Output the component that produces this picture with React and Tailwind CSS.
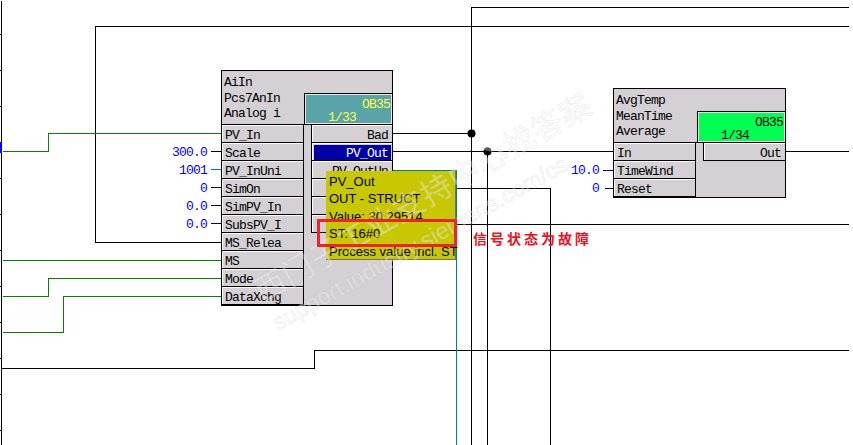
import React from 'react';

const BLACK = '#000000';
const GREEN = '#0a7d0a';
const TEAL = '#008080';
const NAVY = '#000080';

// Wires of the chart, as [colour, x1,y1, x2,y2, ...]
const wires = [
  [BLACK, 1, 0, 1, 445],
  [BLACK, 471, 445, 471, 7, 848, 7],
  [BLACK, 222, 242, 95, 242, 95, 26, 848, 26],
  [BLACK, 392, 133, 471, 133],
  [BLACK, 392, 151, 613, 151],
  [BLACK, 487, 151, 487, 445],
  [BLACK, 785, 151, 848, 151],
  [BLACK, 392, 188, 550, 188, 550, 445],
  [BLACK, 392, 224, 848, 224],
  [BLACK, 1, 368, 314, 368, 314, 350, 848, 350],
  [TEAL, 392, 170, 456, 170, 456, 445],
  [GREEN, 2, 151, 48, 151, 48, 133, 222, 133],
  [GREEN, 2, 260, 222, 260],
  [GREEN, 2, 296, 48, 296, 48, 278, 222, 278],
  [GREEN, 2, 332, 63, 332, 63, 296, 222, 296],
  [BLACK, 210, 151, 222, 151],
  [TEAL, 210, 169, 222, 169],
  [BLACK, 210, 187, 222, 187],
  [BLACK, 210, 205, 222, 205],
  [NAVY, 210, 223, 222, 223],
  [BLACK, 604, 188, 613, 188],
  [NAVY, 602, 170, 613, 170],
];

const ticks = [34, 70, 106, 178, 214, 250, 286, 322, 358, 394, 430];

function Wires() {
  return (
    <svg className="absolute inset-0" width="853" height="445" shapeRendering="crispEdges">
      {ticks.map((y) => (
        <line key={y} x1="0" x2="2" y1={y + 0.5} y2={y + 0.5} stroke="#000" />
      ))}
      {wires.map(([color, ...pts], i) => {
        const points = [];
        for (let n = 0; n < pts.length; n += 2) {
          points.push(`${pts[n] + 0.5},${pts[n + 1] + 0.5}`);
        }
        return <polyline key={i} points={points.join(' ')} fill="none" stroke={color} strokeWidth="1" />;
      })}
      <rect x="0" y="142" width="2" height="11" fill="#0000ff" />
      <g shapeRendering="auto">
        <circle cx="471.5" cy="133.5" r="4" fill="#000" />
        <circle cx="487.5" cy="151.5" r="4" fill="#000" />
      </g>
    </svg>
  );
}

function InputPin({ label, value }) {
  return (
    <div className="relative h-[18px] border-b border-black flex">
      {value && (
        <span className="absolute right-full mr-[15px] h-full flex items-center pt-[1px] leading-none text-[#0000ff]">
          {value}
        </span>
      )}
      <div className="flex-1 border-t border-l border-white flex items-center pl-[2px] pt-[2px] leading-none">
        {label}
      </div>
    </div>
  );
}

function OutputPin({ label, selected }) {
  return (
    <div className="h-[18px] border-b border-black flex">
      <div className="flex-1 border-t border-l border-white flex items-center justify-end leading-none">
        {selected ? (
          <span className="w-full h-[15px] mx-[1px] bg-[#0000a8] text-white flex items-center justify-end pt-[2px] pr-[3px]">
            {label}
          </span>
        ) : (
          <span className="pt-[2px] pr-[4px]">{label}</span>
        )}
      </div>
    </div>
  );
}

function Block({ left, top, width, height, lines, badge, inputs, outputs }) {
  return (
    <div
      className="absolute bg-[#d4d0d4] border border-black flex flex-col font-['Liberation_Mono',monospace] text-[13px] tracking-[-0.8px] text-black"
      style={{ left, top, width, height }}
    >
      <div className="relative h-[54px] border-b border-black shrink-0 pl-[2px] pt-[4px] leading-[15.7px]">
        {lines.map((line) => (
          <div key={line}>{line}</div>
        ))}
        <div
          className={`absolute right-0 bottom-0 w-[88px] h-[31px] border-t border-l border-black ${badge.bg} ${badge.color}`}
        >
          <div className="h-full border border-[#e8e8e8] relative leading-none">
            <span className="absolute right-[1px] top-[3px]">OB35</span>
            <span className="absolute left-[22px] -bottom-[1px]">{badge.id}</span>
          </div>
        </div>
      </div>
      <div className="flex flex-1">
        <div className="w-[82px] border-r border-black">
          {inputs.map((pin) => (
            <InputPin key={pin.label} label={pin.label} value={pin.value} />
          ))}
        </div>
        <div className="flex-1 pl-[7px]">
          <div className="border-l border-black">
            {outputs.map((pin, i) => (
              <OutputPin key={i} label={pin} selected={pin === 'PV_Out'} />
            ))}
          </div>
        </div>
      </div>
    </div>
  );
}

function Tooltip() {
  return (
    <div className="absolute left-[326px] top-[171px] w-[130px] h-[89px] bg-[#c8c800] border-r border-b border-[#707070] pl-[3px] pt-[2px] font-['Liberation_Sans',sans-serif] text-[13px] leading-[17.4px] text-black whitespace-nowrap">
      <div>PV_Out</div>
      <div>OUT - STRUCT</div>
      <div>Value: 30.29514</div>
      <div>ST: 16#0</div>
      <div>Process value incl. ST</div>
    </div>
  );
}

export default function App() {
  return (
    <div className="relative w-[853px] h-[445px] overflow-hidden bg-white">
      <Wires />
      <Block
        left={221}
        top={70}
        width={172}
        height={236}
        lines={['AiIn', 'Pcs7AnIn', 'Analog i']}
        badge={{ id: '1/33', bg: 'bg-[#58a4a8]', color: 'text-[#ffff40]' }}
        inputs={[
          { label: 'PV_In' },
          { label: 'Scale', value: '300.0' },
          { label: 'PV_InUni', value: '1001' },
          { label: 'SimOn', value: '0' },
          { label: 'SimPV_In', value: '0.0' },
          { label: 'SubsPV_I', value: '0.0' },
          { label: 'MS_Relea' },
          { label: 'MS' },
          { label: 'Mode' },
          { label: 'DataXchg' },
        ]}
        outputs={['Bad', 'PV_Out', 'PV_OutUn', '', '', '']}
      />
      <Block
        left={613}
        top={88}
        width={173}
        height={110}
        lines={['AvgTemp', 'MeanTime', 'Average']}
        badge={{ id: '1/34', bg: 'bg-[#00ff50]', color: 'text-black' }}
        inputs={[{ label: 'In' }, { label: 'TimeWind', value: '10.0' }, { label: 'Reset', value: '0' }]}
        outputs={['Out']}
      />
      <Tooltip />

      {/* site watermark, lies over the chart */}
      <div className="absolute inset-0 pointer-events-none">
        <div className="absolute left-[222px] top-[176px] w-[400px] text-center -rotate-[30deg] font-['Noto_Sans_CJK_SC',sans-serif] text-[31px] leading-[40px] tracking-[1px] text-white/35 [-webkit-text-stroke:1px_rgba(190,190,190,0.22)] whitespace-nowrap">
          西门子工业支持中心找答案
        </div>
        <div className="absolute left-[220px] top-[228px] w-[400px] text-center -rotate-[29deg] font-['Liberation_Sans',sans-serif] text-[23px] leading-[30px] text-white/35 [-webkit-text-stroke:1px_rgba(190,190,190,0.22)] whitespace-nowrap">
          support.industry.siemens.com/cs
        </div>
      </div>

      {/* red annotation */}
      <div className="absolute left-[317px] top-[219px] w-[140px] h-[28px] border-[3px] border-[#f0202c]" />
      <div className="absolute left-[473px] top-[229px] font-['Noto_Sans_CJK_SC',sans-serif] font-bold text-[14px] leading-[18px] tracking-[3px] text-[#f01020] whitespace-nowrap">
        信号状态为故障
      </div>
    </div>
  );
}
